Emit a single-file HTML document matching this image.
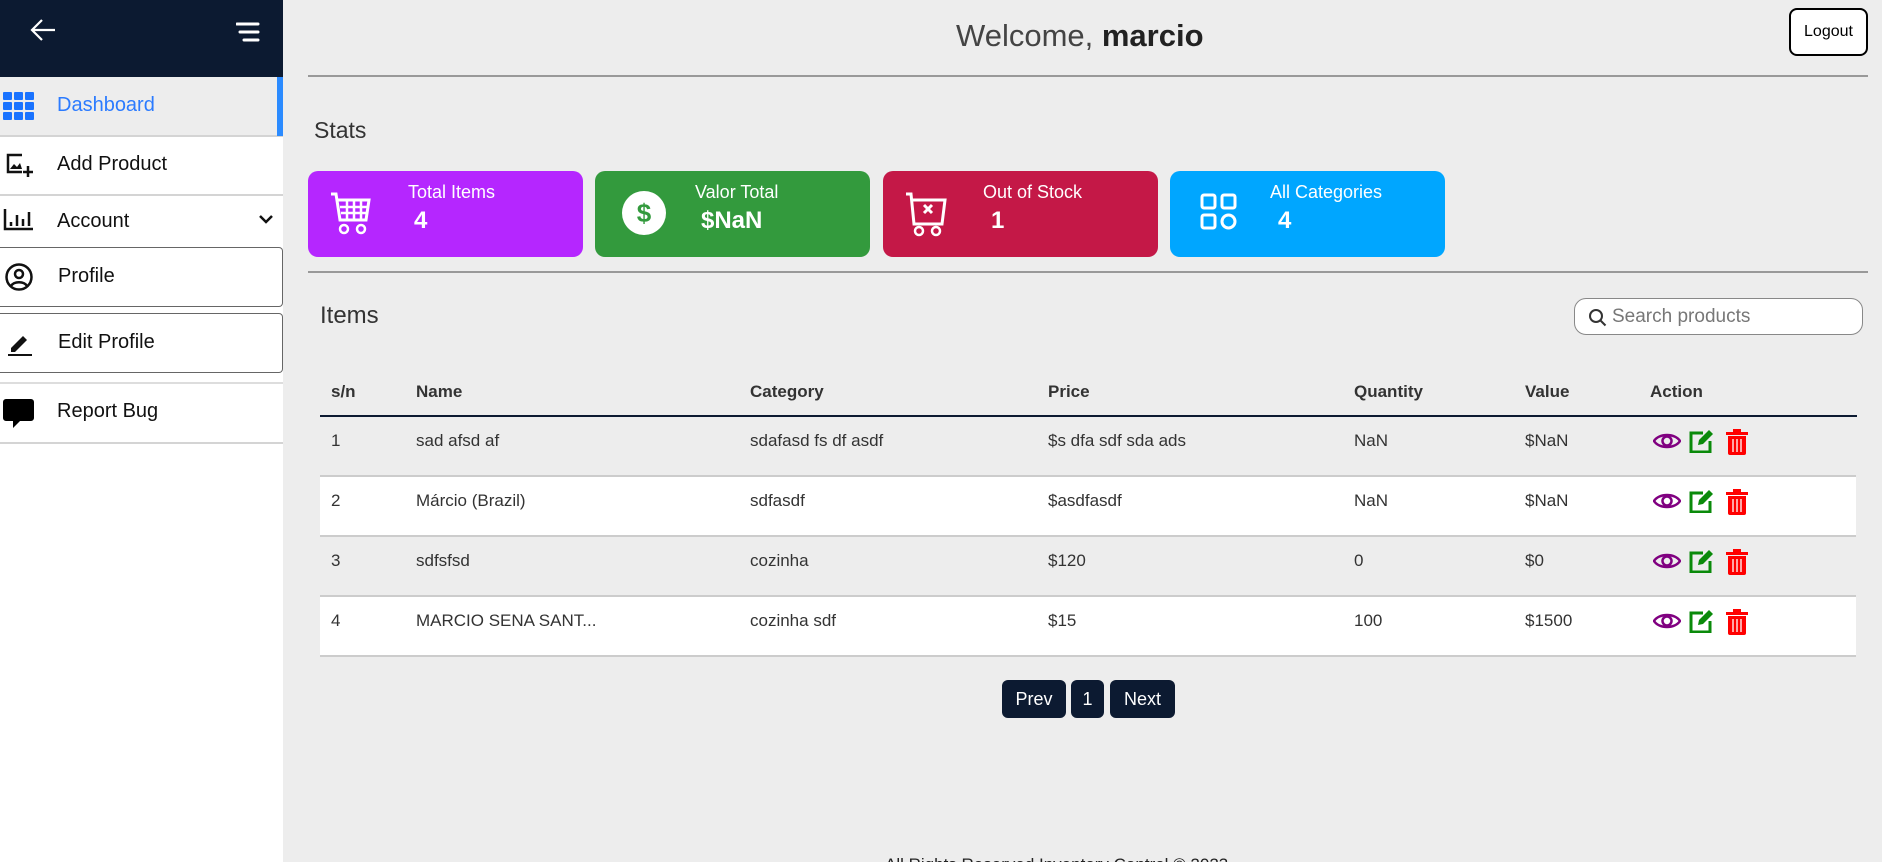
<!DOCTYPE html>
<html><head><meta charset="utf-8"><style>
*{box-sizing:border-box;margin:0;padding:0}
html,body{width:1882px;height:862px;overflow:hidden}
body{background:#ededed;font-family:"Liberation Sans",sans-serif;color:#222;position:relative}
.a{position:absolute}
.side{left:0;top:0;width:283px;height:862px;background:#fff}
.sh{left:0;top:0;width:283px;height:77px;background:#0c1a31}
.item{position:absolute;left:0;width:283px;font-size:20px;color:#111}
.item span{position:absolute;left:57px}
.card{position:absolute;top:171px;width:275px;height:86px;border-radius:10px;color:#fff}
.card .t{position:absolute;left:100px;top:11px;font-size:18px}
.card .v{position:absolute;left:108px;top:36px;font-size:24px;font-weight:bold}
.card svg{position:absolute;left:22px;top:20px}
.row{position:absolute;left:320px;width:1536px;height:60px;font-size:17px;color:#333}
.row div,.hd div{position:absolute;top:14px}
.hd{position:absolute;left:320px;top:368px;width:1536px;font-size:17px;font-weight:bold;color:#333}
.ic{position:absolute;top:12px}
.pg{position:absolute;top:680px;height:38px;background:#0c1a31;color:#fff;border-radius:6px;font-size:18px;text-align:center;line-height:38px}
</style></head><body>
<div class="a side"></div>
<div class="a sh"></div>
<svg class="a" style="left:28px;top:16px" width="30" height="28" viewBox="0 0 30 28"><path d="M27 14H4M14 4L4 14l10 10" stroke="#fff" stroke-width="2.2" fill="none"/></svg>
<svg class="a" style="left:236px;top:22px" width="24" height="22"><path d="M1 2h21M4 10h18M8 18h14" stroke="#fff" stroke-width="3" stroke-linecap="round"/></svg>

<div class="item" style="top:77px;height:60px;background:#ededed;border-bottom:2px solid #d4d4d4"><div class="a" style="right:0;top:0;width:6px;height:59px;background:#2b8bff"></div>
<svg class="a" style="left:3px;top:15px" width="31" height="28"><g fill="#1a73ff"><rect x="0" y="0" width="9" height="8" rx="1"/><rect x="11" y="0" width="9" height="8" rx="1"/><rect x="22" y="0" width="9" height="8" rx="1"/><rect x="0" y="10" width="9" height="8" rx="1"/><rect x="11" y="10" width="9" height="8" rx="1"/><rect x="22" y="10" width="9" height="8" rx="1"/><rect x="0" y="20" width="9" height="8" rx="1"/><rect x="11" y="20" width="9" height="8" rx="1"/><rect x="22" y="20" width="9" height="8" rx="1"/></g></svg>
<span style="top:17px;color:#2b7bff">Dashboard</span></div>
<div class="item" style="top:137px;height:59px;border-bottom:2px solid #d4d4d4">
<svg class="a" style="left:5px;top:16px" width="28" height="26"><path d="M17 2H3v17h14" stroke="#111" stroke-width="2.5" fill="none"/><path d="M5 16l4-5 3 3 3-4 2 6z" fill="#111"/><path d="M23 13v11M18 19h10" stroke="#111" stroke-width="2.5"/></svg>
<span style="top:16px">Add Product</span></div>
<div class="item" style="top:196px;height:51px">
<svg class="a" style="left:3px;top:13px" width="31" height="22"><path d="M2 0v20h28" stroke="#111" stroke-width="2.5" fill="none"/><path d="M8 13v4M14 6v11M20 10v7M26 3v14" stroke="#111" stroke-width="2.5"/></svg>
<span style="top:14px">Account</span>
<svg class="a" style="left:258px;top:18px" width="16" height="12"><path d="M2 2l6 6 6-6" stroke="#111" stroke-width="2.5" fill="none"/></svg></div>
<div class="item" style="top:247px;height:60px;border:1.5px solid #666;border-left:none;border-radius:0 4px 4px 0">
<svg class="a" style="left:5px;top:15px" width="28" height="28"><circle cx="14" cy="14" r="12.5" stroke="#111" stroke-width="2.5" fill="none"/><circle cx="14" cy="11" r="4" stroke="#111" stroke-width="2.5" fill="none"/><path d="M6 23c3-5 13-5 16 0" stroke="#111" stroke-width="2.5" fill="none"/></svg>
<span style="top:17px;left:58px">Profile</span></div>
<div class="item" style="top:313px;height:60px;border:1.5px solid #666;border-left:none;border-radius:0 4px 4px 0">
<svg class="a" style="left:7px;top:17px" width="26" height="26"><path d="M4 17L16 5l4 4L8 21H4z" fill="#111"/><path d="M1 24h24" stroke="#111" stroke-width="2"/></svg>
<span style="top:17px;left:58px">Edit Profile</span></div>
<div class="a" style="left:0;top:382px;width:283px;height:2px;background:#ddd"></div>
<div class="item" style="top:384px;height:60px;border-bottom:2px solid #d4d4d4">
<svg class="a" style="left:3px;top:14px" width="31" height="31"><path d="M3 1h25a3 3 0 0 1 3 3v16a3 3 0 0 1-3 3H17l-7 7v-7H3a3 3 0 0 1-3-3V4a3 3 0 0 1 3-3z" fill="#000"/></svg>
<span style="top:16px">Report Bug</span></div>

<div class="a" style="left:956px;top:18px;font-size:31px;color:#444">Welcome, <b style="color:#222">marcio</b></div>
<div class="a" style="left:1789px;top:8px;width:79px;height:48px;border:2px solid #000;border-radius:8px;background:#fff;font-size:16px;text-align:center;line-height:44px;color:#000">Logout</div>
<div class="a" style="left:308px;top:75px;width:1560px;height:1.5px;background:#999"></div>
<div class="a" style="left:314px;top:117px;font-size:23px;color:#333">Stats</div>

<div class="card" style="left:308px;background:#b526ff"><svg width="46" height="46" viewBox="0 0 46 46"><path d="M1 3h5l4 26h26l3-20H8" stroke="#fff" stroke-width="3" fill="none"/><path d="M10 16h28M11 22h26M17 9v20M24 9v20M31 9v20" stroke="#fff" stroke-width="2.5"/><circle cx="14" cy="38" r="4" stroke="#fff" stroke-width="2.5" fill="none"/><circle cx="31" cy="38" r="4" stroke="#fff" stroke-width="2.5" fill="none"/></svg><div class="t">Total Items</div><div class="v" style="left:106px">4</div></div>
<div class="card" style="left:595px;background:#339a3d"><svg width="46" height="46" style="top:20px;left:27px"><circle cx="22" cy="22" r="22" fill="#fff"/><text x="22" y="31" font-size="26" font-weight="bold" fill="#339a3d" text-anchor="middle" font-family="Liberation Sans">$</text></svg><div class="t" style="left:100px">Valor Total</div><div class="v" style="left:106px">$NaN</div></div>
<div class="card" style="left:883px;background:#c41847"><svg width="46" height="46"><path d="M1 3h5l3 30h28l3-24H8" stroke="#fff" stroke-width="3" fill="none"/><path d="M19 14l8 8M27 14l-8 8" stroke="#fff" stroke-width="3"/><circle cx="14" cy="40" r="4" stroke="#fff" stroke-width="2.5" fill="none"/><circle cx="31" cy="40" r="4" stroke="#fff" stroke-width="2.5" fill="none"/></svg><div class="t">Out of Stock</div><div class="v">1</div></div>
<div class="card" style="left:1170px;background:#00a6ff"><svg width="46" height="46" style="left:30px;top:22px"><g stroke="#fff" stroke-width="3" fill="none"><rect x="2" y="2" width="13" height="13" rx="2"/><rect x="22" y="2" width="13" height="13" rx="2"/><rect x="2" y="22" width="13" height="13" rx="2"/><circle cx="28.5" cy="28.5" r="6.5"/></g></svg><div class="t">All Categories</div><div class="v">4</div></div>

<div class="a" style="left:308px;top:271px;width:1560px;height:1.5px;background:#999"></div>
<div class="a" style="left:320px;top:302px;font-size:24px;color:#333">Items</div>
<div class="a" style="left:1574px;top:298px;width:289px;height:37px;border:1px solid #888;border-radius:12px;background:#fff"><svg class="a" style="left:13px;top:9px" width="19" height="19"><circle cx="8" cy="8" r="6" stroke="#333" stroke-width="2" fill="none"/><path d="M12.5 12.5l5 5" stroke="#333" stroke-width="2"/></svg><span class="a" style="left:37px;top:7px;font-size:19px;color:#777">Search products</span></div>

<div class="hd"><div style="left:11px">s/n</div><div style="left:96px">Name</div><div style="left:430px">Category</div><div style="left:728px">Price</div><div style="left:1034px">Quantity</div><div style="left:1205px">Value</div><div style="left:1330px">Action</div></div>
<div class="a" style="left:320px;top:415px;width:1537px;height:2px;background:#0c1a31"></div>

<div class="row" style="top:417px;border-bottom:2px solid #ccc"><div style="left:11px">1</div><div style="left:96px">sad afsd af</div><div style="left:430px">sdafasd fs df asdf</div><div style="left:728px">$s dfa sdf sda ads</div><div style="left:1034px">NaN</div><div style="left:1205px">$NaN</div>ICONS</div>
<div class="row" style="top:477px;background:#fff;border-bottom:2px solid #ccc"><div style="left:11px">2</div><div style="left:96px">Márcio (Brazil)</div><div style="left:430px">sdfasdf</div><div style="left:728px">$asdfasdf</div><div style="left:1034px">NaN</div><div style="left:1205px">$NaN</div>ICONS</div>
<div class="row" style="top:537px;border-bottom:2px solid #ccc"><div style="left:11px">3</div><div style="left:96px">sdfsfsd</div><div style="left:430px">cozinha</div><div style="left:728px">$120</div><div style="left:1034px">0</div><div style="left:1205px">$0</div>ICONS</div>
<div class="row" style="top:597px;background:#fff;border-bottom:2px solid #ccc"><div style="left:11px">4</div><div style="left:96px">MARCIO SENA SANT...</div><div style="left:430px">cozinha sdf</div><div style="left:728px">$15</div><div style="left:1034px">100</div><div style="left:1205px">$1500</div>ICONS</div>

<div class="pg" style="left:1002px;width:64px">Prev</div>
<div class="pg" style="left:1071px;width:33px">1</div>
<div class="pg" style="left:1110px;width:65px">Next</div>
<div class="a" style="left:885px;top:855px;font-size:17px;color:#222">All Rights Reserved Inventory Control © 2023</div>
<script>
var ic='<svg class="ic" style="left:1333px" width="28" height="24"><path d="M1 12C6 4 22 4 27 12C22 20 6 20 1 12z" stroke="#800080" stroke-width="2.5" fill="none"/><circle cx="14" cy="12" r="4.5" stroke="#800080" stroke-width="2.5" fill="none"/></svg><svg class="ic" style="left:1369px" width="26" height="24"><path d="M14 4H2v19h19V12" stroke="#0a8a0a" stroke-width="3" fill="none"/><path d="M9 16l1-5L20 1l4 4-10 10z" fill="#0a8a0a"/></svg><svg class="ic" style="left:1405px" width="24" height="26"><rect x="1" y="3" width="22" height="3" fill="#f00"/><rect x="8" y="0" width="8" height="3" fill="#f00"/><path d="M3 7h18v17a2 2 0 0 1-2 2H5a2 2 0 0 1-2-2z" fill="#f00"/><path d="M8 10v13M12 10v13M16 10v13" stroke="#fff" stroke-width="1.3"/></svg>';
document.querySelectorAll('.row').forEach(function(r){r.innerHTML=r.innerHTML.replace('ICONS',ic)});
</script>
</body></html>
